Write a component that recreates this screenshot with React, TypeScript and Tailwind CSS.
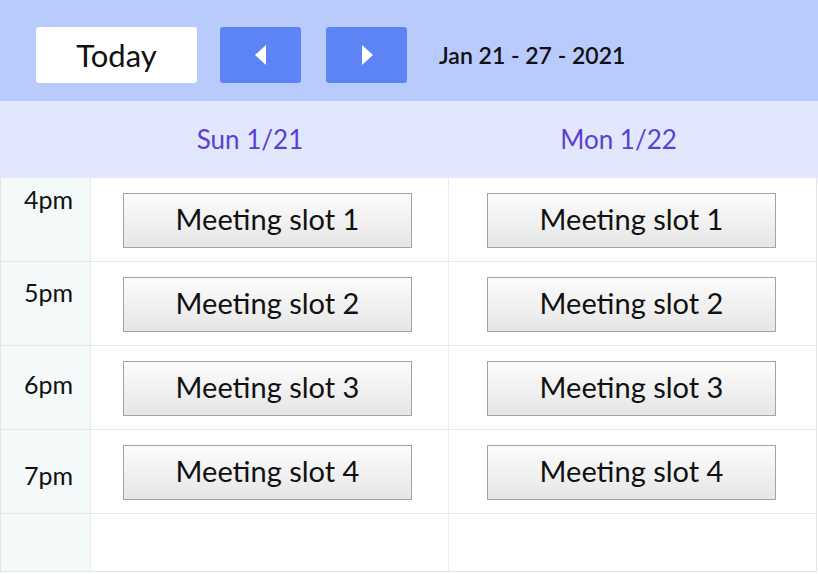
import React from "react";

const rows = [
  { time: "4pm", pad: "pt-[9px]" },
  { time: "5pm", pad: "pt-[18px]" },
  { time: "6pm", pad: "pt-[26px]" },
  { time: "7pm", pad: "pt-[33px]" },
];

function SlotButton({ label }: { label: string }) {
  return (
    <div className="flex h-[55px] w-[289px] items-center justify-center border border-[#a3a3a3] bg-gradient-to-b from-[#fcfcfc] to-[#e6e6e6] pb-[4px] text-[29px] text-[#111]">
      {label}
    </div>
  );
}

export default function App() {
  return (
    <div
      className="h-[574px] w-[818px] overflow-hidden bg-white"
      style={{ fontFamily: "Lato, 'Open Sans', sans-serif" }}
    >
      <header className="flex h-[101px] items-start bg-[#b9cafc] pl-[36px] pt-[27px]">
        <button
          type="button"
          className="flex h-[56px] w-[161px] items-center justify-center rounded-[3px] bg-white text-[31px] text-[#111]"
        >
          Today
        </button>
        <button
          type="button"
          className="ml-[23px] flex h-[56px] w-[81px] items-center justify-center rounded-[3px] bg-[#5d84f4]"
        >
          <svg width="12" height="20" viewBox="0 0 12 20">
            <path d="M11 0 L0 10 L11 20 Z" fill="#fff" />
          </svg>
        </button>
        <button
          type="button"
          className="ml-[25px] flex h-[56px] w-[81px] items-center justify-center rounded-[3px] bg-[#5d84f4]"
        >
          <svg width="12" height="20" viewBox="0 0 12 20">
            <path d="M1 0 L12 10 L1 20 Z" fill="#fff" />
          </svg>
        </button>
        <span className="ml-[32px] flex h-[56px] items-center text-[23px] font-semibold text-[#111]">
          Jan 21 - 27 - 2021
        </span>
      </header>

      <div className="grid h-[77px] grid-cols-[91px_358px_1fr] bg-[#e1e7fd] text-[26px] text-[#5b3fd3]">
        <div />
        <div className="flex items-center justify-center pr-[40px]">Sun 1/21</div>
        <div className="flex items-center justify-center pr-[30px]">Mon 1/22</div>
      </div>

      <div className="mr-[1px] border-b border-l border-r border-[#e4e4e4]">
        {rows.map((row, i) => (
          <div
            key={row.time}
            className="grid h-[84px] grid-cols-[90px_358px_1fr] border-b border-[#e6e6e6]"
          >
            <div className={`border-r border-[#e8eeee] bg-[#f4f9fa] pl-[23px] text-[25px] leading-none text-[#111] ${row.pad}`}>
              {row.time}
            </div>
            <div className="border-r border-[#ececec] pl-[32px] pt-[15px]">
              <SlotButton label={`Meeting slot ${i + 1}`} />
            </div>
            <div className="pl-[38px] pt-[15px]">
              <SlotButton label={`Meeting slot ${i + 1}`} />
            </div>
          </div>
        ))}
        <div className="grid h-[57px] grid-cols-[90px_358px_1fr]">
          <div className="border-r border-[#e8eeee] bg-[#f4f9fa]" />
          <div className="border-r border-[#ececec]" />
          <div />
        </div>
      </div>
    </div>
  );
}
